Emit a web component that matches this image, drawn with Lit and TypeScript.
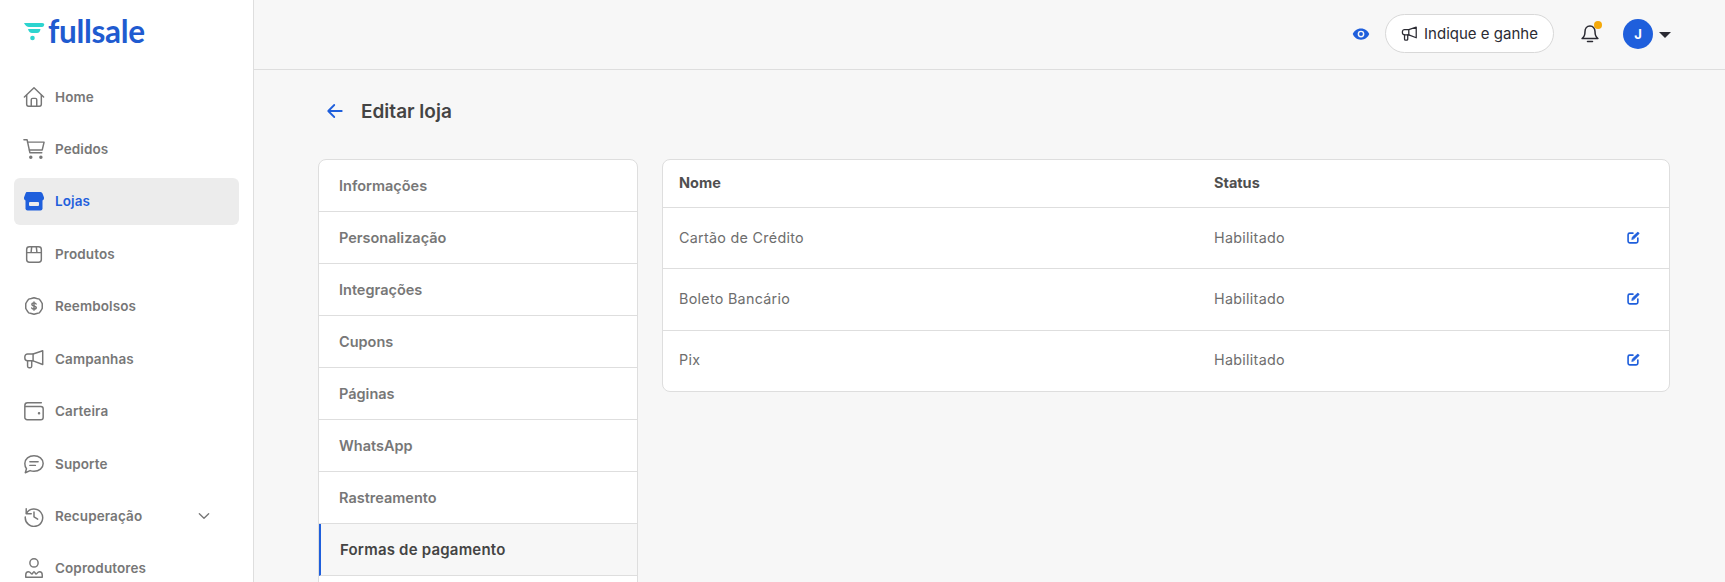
import { LitElement, html, css, svg } from "lit";
import { customElement } from "lit/decorators.js";

const ic = (c: unknown, size = 22, w = 1.6) => html`<svg width=${size} height=${size} viewBox="0 0 24 24" fill="none" stroke="currentColor" stroke-width=${w} stroke-linecap="round" stroke-linejoin="round">${c}</svg>`;

const icons: Record<string, unknown> = {
  home: svg`<path d="M1.500 12 12 2l10.500 10"/><path d="M4 10v10a2 2 0 0 0 2 2h12a2 2 0 0 0 2-2V10"/><path d="M9 22v-7a1.500 1.500 0 0 1 1.500-1.500h3A1.500 1.500 0 0 1 15 15v7"/>`,
  cart: svg`<path d="M1 2h3.500l3 14h13"/><path d="M5 4.500h18l-2 8.500H7"/><circle cx="8.500" cy="21" r="1.100" fill="currentColor"/><circle cx="19.500" cy="21" r="1.100" fill="currentColor"/>`,
  box: svg`<rect x="4" y="4" width="16" height="17" rx="3"/><path d="M4 10.500h16M9.500 4l-.7 6.500M14.500 4l.7 6.500"/>`,
  refund: svg`<path d="M12 3l3 .9 2.800.6 1.700 2.300 1.500 2.700v5l-1.500 2.700-1.700 2.300-2.800.6L12 21l-3-.9-2.800-.6-1.700-2.300L3 14.500v-5l1.500-2.700 1.700-2.300L9 3.900z"/><path d="M14.300 9.800c-.4-.9-1.300-1.200-2.300-1.200-1.300 0-2.300.6-2.300 1.700 0 2.300 4.800 1.100 4.800 3.400 0 1.100-1.100 1.700-2.500 1.700-1.100 0-2.100-.4-2.500-1.300M12 7.500v9"/>`,
  mega: svg`<path d="M21.500 3v15L11 14H5a3 3 0 0 1-3-3V9.500a3 3 0 0 1 3-3h6z"/><path d="M11 6.500V14M5 14v6a1.500 1.500 0 0 0 1.500 1.500H8A1.500 1.500 0 0 0 9.500 20v-6"/>`,
  wallet: svg`<path d="M20 3H5a3 3 0 0 0-3 3v13a2.500 2.500 0 0 0 2.500 2.500h15A2.500 2.500 0 0 0 22 19V9.500A2.500 2.500 0 0 0 19.500 7H2"/><circle cx="17.500" cy="14.500" r=".6" fill="currentColor"/>`,
  chat: svg`<path d="M12 3c5.500 0 10 3.500 10 8.500S17.500 20 12 20c-1.500 0-3-.3-4.300-.8L2.500 21.500l1.300-4.300C2.700 15.800 2 13.800 2 11.500 2 6.500 6.500 3 12 3z"/><path d="M7.500 9.500h9M7.500 13.500h6"/>`,
  history: svg`<path d="M3.500 4v5.500H9"/><path d="M3.800 9A9.500 9.500 0 1 1 2.500 13"/><path d="M12 7.500V13l4 2.500"/>`,
  user: svg`<circle cx="12" cy="6.500" r="4.500"/><path d="M3 22v-2.500c0-1.500 1-3.500 3-3.500 2 0 2.500 2 3.500 2.500 1 .5 1.500-2.500 2.500-2.500s1.500 3 2.500 2.500c1-.5 1.500-2.500 3.500-2.500s3 2 3 3.500V22z"/>`,
};

const menu = [
  ["home", "Home"], ["cart", "Pedidos"], ["store", "Lojas"], ["box", "Produtos"], ["refund", "Reembolsos"],
  ["mega", "Campanhas"], ["wallet", "Carteira"], ["chat", "Suporte"], ["history", "Recuperação"], ["user", "Coprodutores"],
];
const tabs = ["Informações", "Personalização", "Integrações", "Cupons", "Páginas", "WhatsApp", "Rastreamento", "Formas de pagamento", ""];
const methods = ["Cartão de Crédito", "Boleto Bancário", "Pix"];

@customElement("app-root")
export class AppRoot extends LitElement {
  static styles = css`
    :host { display: block; height: 100vh; overflow: hidden; font-family: "Inter", "Liberation Sans", sans-serif; background: #f7f7f7; color: #444; }
    .shell { display: flex; height: 582px; overflow: hidden; }
    .side { flex: none; background: #fff; border-right: 1px solid #dedede; padding: 0 14px; width: 225px; }
    .logo { display: flex; align-items: center; gap: 2px; height: 64px; padding-left: 10px; color: #1f5bd0; }
    .logo span { font-family: "Lato", sans-serif; font-weight: 700; font-size: 31.500px; letter-spacing: -.3px; line-height: 1; }
    .nav { display: flex; flex-direction: column; gap: 5.450px; margin-top: 9px; }
    .item { display: flex; align-items: center; height: 47px; padding: 0 9px; gap: 10px; border-radius: 6px; color: #777; font-size: 13.500px; font-weight: 600; letter-spacing: .1px; }
    .item.on { background: #ececec; color: #1f5fdc; }
    .item svg { flex: none; }
    .item .chev { margin-left: auto; margin-right: 18px; display: flex; }
    .main { flex: 1; min-width: 0; display: flex; flex-direction: column; }
    .top { height: 70px; flex: none; box-sizing: border-box; border-bottom: 1px solid #dedede; display: flex; align-items: center; justify-content: flex-end; padding-right: 55px; padding-bottom: 2px; }
    .eye { color: #1f5fdc; display: flex; margin-right: 15px; }
    .invite { display: flex; align-items: center; gap: 6px; height: 39px; width: 169px; box-sizing: border-box; justify-content: center; background: #fff; border: 1px solid #d8d8d8; border-radius: 20px; color: #2b2b33; font-size: 15px; }
    .bell { position: relative; display: flex; margin-left: 26px; color: #2b2b33; }
    .dot { position: absolute; top: -3px; right: -2px; width: 8px; height: 8px; border-radius: 50%; background: #f5a90a; }
    .avatar { width: 30px; height: 30px; margin-left: 23px; border-radius: 50%; background: #1f5fdc; color: #fff; font-size: 13px; font-weight: 700; display: flex; align-items: center; justify-content: center; }
    .caret { margin-left: 6px; width: 0; height: 0; border-left: 6px solid transparent; border-right: 6px solid transparent; border-top: 6.500px solid #2b2b33; margin-top: 2px; margin-right: -1px; }
    .content { padding: 0 55px 0 64px; }
    .title { display: flex; align-items: center; height: 22px; gap: 17px; margin-top: 30px; margin-left: 8px; }
    .title svg { color: #1f5fdc; }
    .title h1 { margin: 0; font-size: 19px; font-weight: 600; color: #444; }
    .grid { display: grid; grid-template-columns: 320px 1fr; gap: 24px; margin-top: 37px; align-items: start; }
    .tabs { background: #fff; border: 1px solid #dedede; border-radius: 8px 8px 0 0; }
    .tab { height: 51px; box-sizing: border-box; display: flex; align-items: center; padding: 0 0 1px 20px; border-bottom: 1px solid #dedede; height: 52px; font-size: 14.500px; font-weight: 600; color: #777; }
    .tab:last-child { border-bottom: none; }
    .tab.on { background: #f7f7f7; color: #444; border-left: 2px solid #1f5fdc; padding-left: 19px; font-size: 15px; letter-spacing: .2px; }
    .table { background: #fff; border: 1px solid #dedede; border-radius: 8px; }
    .row { display: flex; align-items: center; box-sizing: border-box; height: 61.300px; padding: 0 29px 2px 16px; border-bottom: 1px solid #dedede; font-size: 14.300px; letter-spacing: .3px; color: #6d6d6d; }
    .row:last-child { border-bottom: none; height: 60.300px; }
    .row.head { height: 48px; font-weight: 700; font-size: 14.500px; letter-spacing: 0; color: #4f4f4f; }
    .name { width: 535px; flex: none; }
    .edit { margin-left: auto; display: flex; color: #1f5fdc; }
  `;

  render() {
    return html`<div class="shell">
      <aside class="side">
        <div class="logo">
          <svg width="22" height="18" viewBox="0 0 22 18"><path d="M0 0h18q3 0 2 2.500-.5 1.500-2.500 1.500H5q-3 0-5-4z" fill="#2dd4cf"/><path d="M4 6h12.500q-.5 4-3.500 4H8Q5 10 4 6z" fill="#2dd4cf"/><circle cx="8.500" cy="15" r="2.300" fill="#2dd4cf"/></svg>
          <span>fullsale</span>
        </div>
        <nav class="nav">
          ${menu.map(([k, label]) => html`<div class="item ${k === "store" ? "on" : ""}">
            ${k === "store"
              ? html`<svg width="22" height="22" viewBox="0 0 22 22" fill="#1f5fdc"><path d="M3.500 2h14q1.500 0 2 1.500L21 7.500q.3 3-2.500 3h-15Q.7 10.500 1 7.500l1.500-4Q3 2 3.500 2z"/><path d="M2.500 10h17v8.500a2 2 0 0 1-2 2h-13a2 2 0 0 1-2-2z"/><rect x="6" y="12" width="10" height="4" rx="1" fill="#ececec"/></svg>`
              : ic(icons[k])}
            <span>${label}</span>
            ${k === "history" ? html`<span class="chev">${ic(svg`<path d="M5 8.500l7 7 7-7"/>`, 16, 2)}</span>` : ""}
          </div>`)}
        </nav>
      </aside>
      <div class="main">
        <header class="top">
          <span class="eye"><svg width="18" height="18" viewBox="0 0 24 24" fill="currentColor"><path fill-rule="evenodd" d="M12 4.500C6.500 4.500 2.500 8 1 12c1.500 4 5.500 7.500 11 7.500S21.500 16 23 12c-1.500-4-5.500-7.500-11-7.500zm0 3a4.500 4.500 0 1 1 0 9 4.500 4.500 0 0 1 0-9z"/><circle cx="12" cy="12" r="2.600"/></svg></span>
          <div class="invite">${ic(icons.mega, 17, 1.800)}<span>Indique e ganhe</span></div>
          <div class="bell">${ic(svg`<path d="M12 2.500c-4 0-6 3-6 6.500 0 5-1.500 7-3.500 8.500h19C19.500 16 18 14 18 9c0-3.500-2-6.500-6-6.500z"/><path d="M9 21h6"/>`, 20, 1.800)}<span class="dot"></span></div>
          <div class="avatar">J</div>
          <span class="caret"></span>
        </header>
        <div class="content">
          <div class="title">
            ${ic(svg`<path d="M21 12H3.500M11 4l-8 8 8 8"/>`, 18, 2.400)}
            <h1>Editar loja</h1>
          </div>
          <div class="grid">
            <div class="tabs">
              ${tabs.map((t) => html`<div class="tab ${t === "Formas de pagamento" ? "on" : ""}">${t}</div>`)}
            </div>
            <div class="table">
              <div class="row head"><span class="name">Nome</span><span>Status</span></div>
              ${methods.map((m) => html`<div class="row"><span class="name">${m}</span><span>Habilitado</span>
                <span class="edit"><svg width="13" height="13" viewBox="0 0 24 24" fill="none" stroke="currentColor" stroke-width="3" stroke-linecap="round"><path d="M11 4H5a3 3 0 0 0-3 3v12a3 3 0 0 0 3 3h12a3 3 0 0 0 3-3v-6"/><path d="M9 15l1-4L20 2l2.500 2.500-9.500 9.500z" fill="currentColor" stroke-width="1.500"/></svg></span></div>`)}
            </div>
          </div>
        </div>
      </div>
    </div>`;
  }
}
